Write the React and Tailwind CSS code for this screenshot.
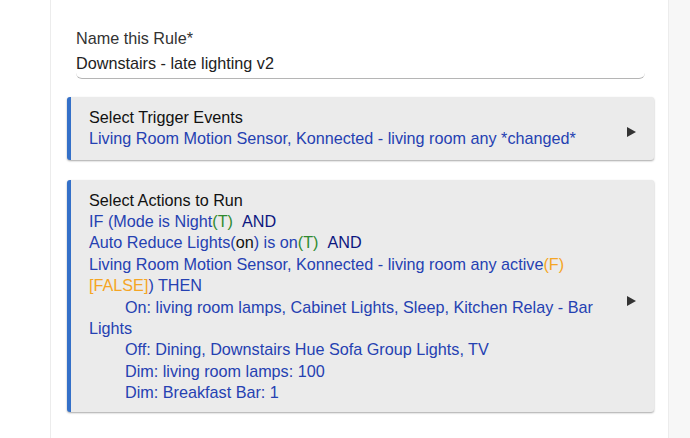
import React from "react";

const B = ({ children }) => <span className="text-[#2541b2]">{children}</span>;
const N = ({ children }) => <span className="text-[#0d1780]">{children}</span>;
const G = ({ children }) => <span className="text-[#2f8a2f]">{children}</span>;
const O = ({ children }) => <span className="text-[#f5a524]">{children}</span>;

function Arrow() {
  return (
    <svg width="9" height="10" viewBox="0 0 9 10" className="mt-[8px] shrink-0">
      <path d="M0 0 L9 5 L0 10 Z" fill="#333" />
    </svg>
  );
}

export default function App() {
  return (
    <div
      className="flex h-[438px] w-[690px] overflow-hidden bg-white text-[16.2px] leading-[21.4px]"
      style={{ fontFamily: '"Liberation Sans", Arial, sans-serif' }}
    >
      <div className="w-[50px] shrink-0 bg-white" />
      <div className="w-[619px] shrink-0 border-x border-[#ececec] bg-white pl-[16px] pr-[14px] pt-[28px]">
        <div className="ml-[9px] mr-[9px]">
          <div className="text-[#333]">Name this Rule*</div>
          <div className="mt-[4px] rounded-b-[6px] border-b border-[#b5b5b5] pb-[3px] text-[#222]">
            Downstairs - late lighting v2
          </div>
        </div>

        <div className="mt-[18px] flex items-center rounded-[3px] border-l-[4px] border-[#3470c8] bg-[#ebebeb] pl-[18px] pr-[18px] pt-[10px] pb-[10px] shadow-[0_1px_2px_rgba(0,0,0,0.35)]">
          <div className="flex-1">
            <div className="text-[#111]">Select Trigger Events</div>
            <B>Living Room Motion Sensor, Konnected - living room any *changed*</B>
          </div>
          <Arrow />
        </div>

        <div className="mt-[20px] flex items-center rounded-[3px] border-l-[4px] border-[#3470c8] bg-[#ebebeb] pl-[18px] pr-[18px] pt-[10px] pb-[8px] shadow-[0_1px_2px_rgba(0,0,0,0.35)]">
          <div className="flex-1">
            <div className="text-[#111]">Select Actions to Run</div>
            <div>
              <B>IF (Mode is Night</B><G>(T)</G> <N>&nbsp;AND</N>
            </div>
            <div>
              <B>Auto Reduce Lights(</B><span className="text-[#111]">on</span><B>) is on</B><G>(T)</G> <N>&nbsp;AND</N>
            </div>
            <div>
              <B>Living Room Motion Sensor, Konnected - living room any active</B><O>(F)</O>
            </div>
            <div>
              <O>[FALSE]</O><B>) THEN</B>
            </div>
            <div className="pl-[36px]">
              <B>On: living room lamps, Cabinet Lights, Sleep, Kitchen Relay - Bar</B>
            </div>
            <div>
              <B>Lights</B>
            </div>
            <div className="pl-[36px]">
              <B>Off: Dining, Downstairs Hue Sofa Group Lights, TV</B>
            </div>
            <div className="pl-[36px]">
              <B>Dim: living room lamps: 100</B>
            </div>
            <div className="pl-[36px]">
              <B>Dim: Breakfast Bar: 1</B>
            </div>
          </div>
          <Arrow />
        </div>
      </div>
      <div className="flex-1 bg-[#f7f7f7]" />
    </div>
  );
}
